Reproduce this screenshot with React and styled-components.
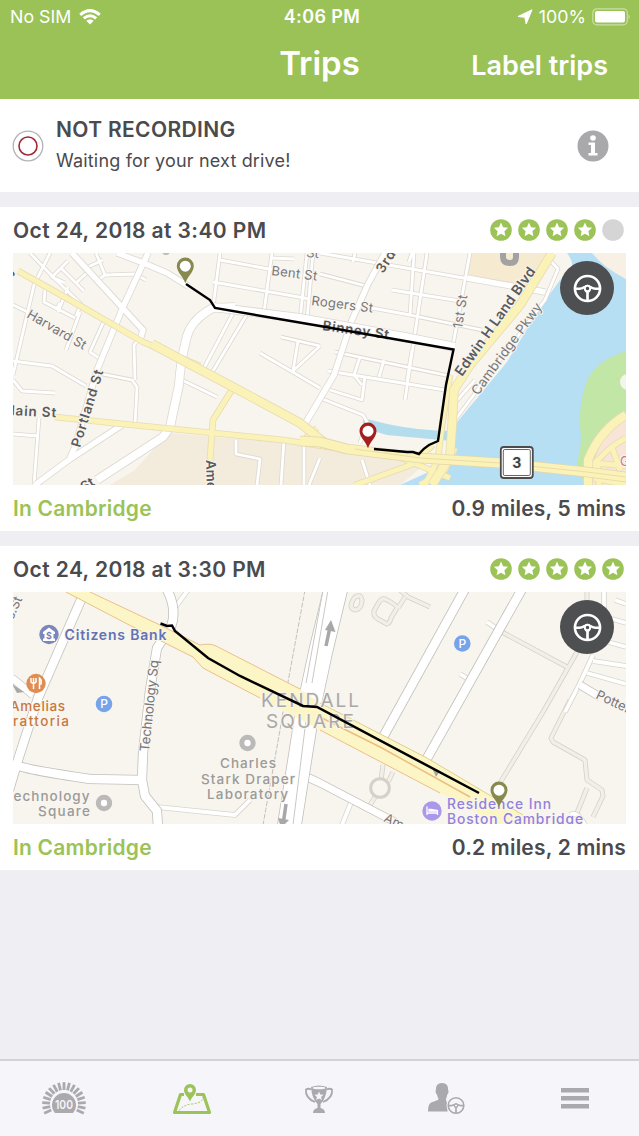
import React from "react";
import styled, { createGlobalStyle } from "styled-components";

const GlobalStyle = createGlobalStyle`
  * {
    box-sizing: border-box;
  }

  body {
    margin: 0;
    background: #efeef2;
    font-family: "Inter", "Liberation Sans", sans-serif;
  }

  svg {
    display: block;
  }
`;

const Screen = styled.div`
  display: flex;
  flex-direction: column;
  height: 1136px;
  width: 639px;
  overflow: hidden;
  background: #efeef2;
  color: #4b4a4d;
`;

const Header = styled.header`
  height: 99px;
  flex: none;
  background: #9ac256;
  color: #fff;
`;

const StatusBar = styled.div`
  display: grid;
  grid-template-columns: 1fr auto 1fr;
  align-items: center;
  height: 33px;
  padding: 0 9px 0 10px;
  font-size: 17.8px;
`;

const StatusGroup = styled.div`
  display: flex;
  align-items: center;
  justify-content: ${(props) => (props.$end ? "flex-end" : "flex-start")};
  gap: ${(props) => (props.$end ? 6 : 8)}px;
`;

const Clock = styled.span`
  padding-left: 4px;
  font-weight: 600;
  font-size: 18px;
  letter-spacing: 0.4px;
`;

const NavBar = styled.div`
  display: grid;
  grid-template-columns: 1fr auto 1fr;
  align-items: center;
  height: 60px;
  padding: 0 31px;
`;

const Title = styled.h1`
  grid-column: 2;
  margin: 0;
  font-size: 33px;
  line-height: 60px;
  font-weight: 600;
  letter-spacing: 0;
`;

const NavAction = styled.a`
  justify-self: end;
  padding-top: 4px;
  font-size: 27px;
  font-weight: 600;
  letter-spacing: 0;
`;

const RecordingPanel = styled.section`
  display: flex;
  align-items: center;
  flex: none;
  height: 93px;
  padding: 0 30px 0 12px;
  background: #fff;
`;

const RecordingText = styled.div`
  flex: 1;
  margin-left: 12px;
`;

const RecordingTitle = styled.div`
  font-size: 21px;
  line-height: 30px;
  font-weight: 600;
  letter-spacing: 0.35px;
`;

const RecordingHint = styled.div`
  font-size: 18px;
  line-height: 31px;
  letter-spacing: 0.17px;
`;

const Card = styled.article`
  flex: none;
  height: 324px;
  margin-top: 15px;
  padding: 0 13px;
  background: #fff;
`;

const CardRow = styled.div`
  display: flex;
  align-items: center;
  justify-content: space-between;
  height: 46px;
  font-size: 21px;
  font-weight: 600;
`;

const TripDate = styled.span`
  letter-spacing: 0.41px;
`;

const Place = styled.span`
  color: #9bc357;
  letter-spacing: 0.22px;
`;

const Distance = styled.span`
  letter-spacing: 0.2px;
`;

const Stars = styled.div`
  display: flex;
  gap: 6px;
  margin-right: 2px;
`;

const MapFrame = styled.div`
  position: relative;
  height: 232px;
  overflow: hidden;

  text {
    font-family: "Inter", sans-serif;
    paint-order: stroke;
    stroke: #f8f5ef;
    stroke-width: 2px;
    stroke-linejoin: round;
  }
`;

const WheelBadge = styled.div`
  position: absolute;
  top: 8px;
  right: 12px;
  display: grid;
  place-items: center;
  width: 54px;
  height: 54px;
  border-radius: 50%;
  background: #4e4f51;
  color: #fff;
`;

const TabBar = styled.nav`
  display: grid;
  grid-template-columns: repeat(5, 1fr);
  align-items: start;
  justify-items: center;
  flex: none;
  height: 77px;
  margin-top: auto;
  padding-top: 21px;
  background: #f6f5f9;
  border-top: 2px solid #d3d2d6;
`;

const Tab = styled.div`
  padding-top: ${(props) => props.$top}px;
  color: ${(props) => (props.$active ? "#9bc357" : "#aaa9ad")};
`;

const starPath =
  "M11 3.6l2.1 4.6 5 .6-3.7 3.4 1 5L11 14.7l-4.4 2.5 1-5-3.7-3.4 5-.6z";

const Star = ({ filled }) => (
  <svg width="22" height="22" viewBox="0 0 22 22">
    <circle cx="11" cy="11" r="10.8" fill={filled ? "#9bc357" : "#d5d5d5"} />
    {filled && <path d={starPath} fill="#fff" />}
  </svg>
);

const Wheel = ({ size, ...rest }) => (
  <svg width={size} height={size} viewBox="0 0 30 30" fill="none" stroke="currentColor" {...rest}>
    <circle cx="15" cy="15" r="13" strokeWidth="2.7" />
    <path d="M2 15.2H7Q10 15 12 13.500M28 15.200H23Q20 15 18 13.500" strokeWidth="2.700" />
    <path d="M11.500 13.500Q15 10.500 18.500 13.500" strokeWidth="1.500" />
    <path d="M15 18V28" strokeWidth="2.800" />
    <path d="M12 15.500L14 19M18 15.500L16 19" strokeWidth="1.500" />
    <circle cx="15" cy="15" r="2.800" strokeWidth="2" />
  </svg>
);

const Pin = ({ x, y, color }) => (
  <g transform={`translate(${x} ${y})`}>
    <path
      d="M0 0C-1.500-6.500-8.500-11-8.500-17.500A8.500 8.500 0 0 1 8.500-17.500C8.500-11 1.500-6.500 0 0z"
      fill={color}
    />
    <circle cy="-17.300" r="5.500" fill="#fff" />
  </g>
);

// Each road is stroked twice: once for its outline, once for its surface.
const Roads = ({ paths, width, fill = "#fff", edge = "#ddd9d1" }) => (
  <g fill="none" strokeLinejoin="round">
    {paths.map((d) => (
      <path key={`e${d}`} d={d} stroke={edge} strokeWidth={width + 1.6} />
    ))}
    {paths.map((d) => (
      <path key={d} d={d} stroke={fill} strokeWidth={width} />
    ))}
  </g>
);

const Label = ({ x, y, rotate = 0, size = 13.5, width, color = "#77767a", weight = 400, children }) => (
  <text
    transform={`translate(${x} ${y}) rotate(${rotate})`}
    fontSize={size}
    fontWeight={weight}
    fill={color}
    textLength={width}
  >
    {children}
  </text>
);

const Parking = ({ x, y }) => (
  <g>
    <circle cx={x} cy={y} r="8.300" fill="#76a3ea" />
    <text x={x} y={y + 4.2} textAnchor="middle" fontSize="12" fontWeight="500" fill="#fff" style={{ stroke: "none" }}>
      P
    </text>
  </g>
);

const Landmark = ({ x, y }) => (
  <circle cx={x} cy={y} r="5.700" fill="#fff" stroke="#bcbab8" strokeWidth="5" />
);

const RiverMap = () => (
  <svg width="613" height="232" viewBox="13 253 613 232">
    <rect x="13" y="253" width="613" height="232" fill="#f8f4ee" />
    <path d="M168 433L320 446 430 460 400 485H110L135 470z" fill="#f3ebdc" />
    <path d="M470 253H552L528 286 466 279z" fill="#f6ebd0" />
    <path d="M567 253H594Q608 268 626 279V485H400L422 475 449 462 453 427 507 362 540 308 560 280Q580 270 567 253z" fill="#b7dff4" />
    <path d="M592 253H626V279Q604 268 592 253z" fill="#f8f0e4" />
    <path d="M626 351Q600 359 588 378 579 400 580 425Q583 445 577 462L584 485H626z" fill="#c1e6a6" />
    <circle cx="628" cy="382" r="8" fill="#f4f5ea" />
    <path d="M626 417Q598 436 592 470L584 485H626z" fill="#f9e4d8" />
    <path d="M363 418L387 424Q420 431 452 431V441L387 435 363 428z" fill="#b3dcec" />

    <Roads
      width={2.8}
      paths={[
        "M30 253L53 277 81 304 76 316",
        "M13 305L38 317M13 361Q35 364 52 366L86 386",
        "M50 253L34 285 13 375",
        "M61 268L84 291M68 261L52 277 65 283M96 253L105 275 95 282M105 275L135 274 146 280",
        "M88 267L103 260M76 283L90 270M58 312L68 287",
        "M45 290L44 302 75 318M56 310L60 303M80 312L66 350M103 323L90 352 102 360",
        "M102 374L132 380 137 387 135 425M135 380L134 345 142 336",
        "M13 380L22 391 55 393M13 434L38 436M39 418L34 485",
        "M220 253L213 308M220 260L274 270M213 282L310 299M272 253L264 312",
        "M313 253L307 320M272 258L294 259M307 253L300 320",
        "M355 253L353 262M414 253L410 315M412 253L409 262",
        "M320 253L475 280M320 274L370 287M427 253L405 400",
        "M392 290L460 301M372 308L410 315 482 330M470 253L453 345",
        "M233 313L204 368M247 314L213 371M281 337L320 346M298 341L293 371M260 353L320 388M293 371L320 346",
        "M335 352L450 376M360 357L354 375 362 385M384 360L379 377M412 350L407 381M328 371L445 390M320 398L363 415 367 422 360 443",
        "M365 376L362 400 330 390",
        "M182 380L217 397M236 440V454L260 459 257 485M284 440L281 485M304 443V485M320 458L309 485",
        "M550 260L558 269 545 300 455 420 453 405M453 405L475 380",
        "M362 460L370 485",
      ]}
    />
    <Roads
      width={5.5}
      paths={[
        "M117 253L146 264 167 273 188 286",
        "M148 253L123 307 97 370 75 447 70 458",
        "M72 253L143 330 140 340",
        "M122 425L70 459 35 485",
        "M385 253L368 284 352 320 334 375 305 424",
        "M467 278L545 292",
      ]}
    />
    <Roads
      width={8}
      paths={["M235 307L213 308Q190 320 186 340 180 365 179 385L170 427 163 437 97 480", "M213 307L300 318 405 337 455 347"]}
    />
    <Roads
      width={5}
      fill="#fbf2b8"
      edge="#e6dcb4"
      paths={[
        "M233 388L213 420 212 432 210 460",
        "M18 271L70 300 143 342 200 366",
        "M55 417L133 425 283 440 350 450",
        "M305 439L317 428",
        "M355 485L405 467 433 456M433 445Q412 464 399 457L450 478",
        "M450 375L442 425 438 459 425 485",
        "M455 448L445 470 420 485",
        "M626 438Q604 450 594 466L588 485M599 485L597 458M584 462L626 466M612 447L620 470M594 478L626 485",
      ]}
    />
    <Roads
      width={8}
      fill="#fbf2b8"
      edge="#e6dcb4"
      paths={[
        "M152 344L182 360 233 387 300 423 325 443",
        "M552 253L520 305 470 365 454 390 452 427 450 457 432 485",
        "M626 415Q600 430 588 460V485",
      ]}
    />
    <Roads
      width={9}
      fill="#fbf2b8"
      edge="#e3d7aa"
      paths={["M300 441L320 442 347 449 420 458 500 463 587 472 626 477"]}
    />
    <path d="M355 449L420 458 500 463 587 472 626 477" stroke="#e9dcaa" fill="none" />

    <path d="M503 253V257Q503 263 510 263 516 263 516 257V253" fill="none" stroke="#a3a2a2" strokeWidth="6" />
    <circle cx="166" cy="251" r="4" fill="#bbb9bb" />
    <Label x={11} y={276} rotate={-68} weight={600} color="#555457">y</Label>
    <Label x={26} y={317} rotate={30} size={13} width={66}>Harvard St</Label>
    <Label x={271} y={275} rotate={7} size={13} width={46}>Bent St</Label>
    <Label x={311} y={305} rotate={7} size={13} width={62}>Rogers St</Label>
    <Label x={306} y={257} rotate={5} size={13}>St</Label>
    <Label x={383} y={274} rotate={-57} weight={600} color="#5b5a5d" width={24}>3rd</Label>
    <Label x={322} y={330} rotate={8} weight={600} color="#5b5a5d" width={67}>Binney St</Label>
    <Label x={462} y={329} rotate={-81} size={13} width={34}>1st St</Label>
    <Label x={462} y={377} rotate={-55} size={14} weight={600} color="#5b5a5d" width={129}>Edwin H Land Blvd</Label>
    <Label x={478} y={396} rotate={-54} size={13.3} width={110}>Cambridge Pkwy</Label>
    <Label x={11} y={415} rotate={3} weight={600} color="#5b5a5d" width={45}>lain St</Label>
    <Label x={80} y={448} rotate={-73} weight={600} color="#5b5a5d" width={80}>Portland St</Label>
    <Label x={84} y={492} rotate={-32} weight={600} color="#5b5a5d">St</Label>
    <Label x={206} y={460} rotate={88} weight={600} color="#5b5a5d">Ames</Label>
    <Label x={620} y={466} size={13} color="#dc7477">G</Label>

    <path
      d="M186 284L210 300 215 308 320 326 453.500 349.500 446 385 441 420 438 441 429 445Q424 448 419 454L413 452H407L374 449"
      fill="none"
      stroke="#000"
      strokeWidth="2.400"
    />
    <Pin x={185.3} y={283.5} color="#87894f" />
    <Pin x={368} y={448.5} color="#a31f1e" />
    <rect x="500.800" y="447" width="32" height="31" rx="3" fill="#fff" stroke="#4c4c4c" strokeWidth="1.800" />
    <rect x="503.300" y="449.500" width="27" height="26" rx="1.500" fill="none" stroke="#666" />
    <text x="516.800" y="468" textAnchor="middle" fontSize="14" fontWeight="700" fill="#3f3f3f">3</text>
  </svg>
);

const KendallMap = () => (
  <svg width="613" height="232" viewBox="13 592 613 232">
    <rect x="13" y="592" width="613" height="232" fill="#f8f5ef" />
    <Roads
      width={3.4}
      fill="#f2efe6"
      edge="#d4d1c9"
      paths={[
        "M502 632L567 667M400 590L408 597 430 607M405 597L398 608",
        "M587 590V600L577 652 543 712 500 783",
        "M570 700L551 738 553 742 585 760 587 780 602 790 603 796 593 817M587 788L577 813",
        "M383 765L381 780M393 772L388 782M375 797L370 805",
        "M379 602L374 611Q373 616 378 619L387 624Q390 623 391 618L397 608Q397 605 385 599 382 598 379 602",
        "M353 600Q348 609 356 610 362 608 362 600 361 595 358 596 355 596 353 600",
      ]}
    />
    <Roads
      width={3.8}
      edge="#d8d5cd"
      paths={[
        "M157 807L235 815 250 800",
        "M188 590L174 609",
        "M593 655L580 683 565 712M593 661L626 666M587 673L626 684M615 600L626 604M612 619L626 623M608 642L626 647",
        "M487 622L497 629M460 674L468 679M604 590V620",
        "M352 800L342 825",
        "M570 815Q577 810 585 825",
      ]}
    />
    <Roads width={7} edge="#c9c7c2" paths={["M580 685L600 697", "M305 776L320 783 395 822", "M12 678L33 695"]} />
    <Roads
      width={8.5}
      edge="#c2c0bc"
      paths={[
        "M84 593L38 698 17 763 9 790",
        "M17 765Q22 769 90 779L143 780",
        "M165 586Q178 608 171 627L157 648 150 690 143 753 142 780 145 796 157 811 158 828",
        "M465 589L382 739",
        "M522 589L425 762",
      ]}
    />
    <Roads width={23} edge="#c2c0bc" paths={["M336 588L321 650 306 720 289 828"]} />
    <path d="M323 590L306 683M328 590L312 683M306 720L293 825" fill="none" stroke="#cac8c4" />
    <path d="M305 590L288 682 280 730 263 825" fill="none" stroke="#c3c1bd" strokeDasharray="5 1.500" />
    <path
      d="M66 592L135 628 165 643 193 657 203 668 260 698 320 730 440 793 500 825H543L523 815 427 758 320 703 300 689 213 645 200 645 160 625 90 592z"
      fill="#fcf6c7"
    />
    <g fill="none" stroke="#ebbf87" strokeWidth="1">
      <path d="M66 592L135 628 165 643 193 657 203 668 260 698M320 730L440 793" />
      <path d="M90 592L160 625 200 645Q210 643 216 646L300 689" />
      <path d="M320 717L382 748 470 797" stroke="#edbd80" strokeWidth="1.500" />
      <path d="M320 703L427 758 523 815" stroke="#ddd08c" />
    </g>
    <circle cx="380" cy="788" r="9.300" fill="#f8f5ef" stroke="#d4d1c9" strokeWidth="3" />
    <path d="M432 768L440 771 436 777z" fill="#aaa69d" />
    <g fill="none" stroke="#a9a8a8" strokeWidth="3.500">
      <path d="M326 646L330 627M283 825L286 804" />
    </g>
    <path d="M331 620L335.500 632 325 630z" fill="#a9a8a8" />
    <path d="M278 818L289 820 281 828z" fill="#a9a8a8" />
    <path d="M12 684L24 692 17 693z" fill="#a9a8a8" />

    <Label x={13} y={620} rotate={-66} size={13}>s.St</Label>
    <circle cx="49" cy="634.500" r="9.700" fill="#7b86bd" />
    <path d="M43 632L49 627.500 55 632V634H53.500V638.500H55V641H43V638.500H44.500V634H43z" fill="#fff" />
    <text x="49" y="638.500" textAnchor="middle" fontSize="9" fontWeight="600" fill="#6e79b5" style={{ stroke: "none" }}>$</text>
    <Label x={64.5} y={639.5} size={14} weight={600} color="#6272b2" width={102}>Citizens Bank</Label>
    <circle cx="36" cy="683.500" r="9.700" fill="#df8d52" />
    <g fill="none" stroke="#fff" strokeWidth="1.500">
      <path d="M33.500 678V689M31 678V682Q33.500 685 36 682V678M39.500 689V678Q42 680 41 684H39.500" />
    </g>
    <Label x={10} y={711} size={13.5} weight={500} color="#c9773f" width={55}>Amelias</Label>
    <Label x={13} y={726} size={13.5} weight={500} color="#c9773f" width={56}>rattoria</Label>
    <Parking x={104} y={704} />
    <Parking x={462.3} y={643.5} />
    <Label x={149} y={752} rotate={-84} size={13.300} width={92}>Technology Sq</Label>
    <Label x={261} y={707} size={19} color="#aaa8a6" width={98}>KENDALL</Label>
    <Label x={266} y={727.5} size={19} color="#aaa8a6" width={88}>SQUARE</Label>
    <Landmark x={247.500} y={743} />
    <Label x={220} y={768} size={13.5} weight={500} color="#9b9a98" width={56}>Charles</Label>
    <Label x={201} y={783.5} size={13.500} weight={500} color="#9b9a98" width={94}>Stark Draper</Label>
    <Label x={207} y={799} size={13.5} weight={500} color="#9b9a98" width={81}>Laboratory</Label>
    <Label x={13.500} y={800.500} size={13.500} weight={500} color="#9b9a98" width={76}>echnology</Label>
    <Label x={38} y={816} size={13.5} weight={500} color="#9b9a98" width={52}>Square</Label>
    <Landmark x={104} y={803} />
    <Label x={383} y={821} rotate={26} size={13}>Ames</Label>
    <Label x={595} y={698} rotate={25} size={13}>Potter</Label>

    <path
      d="M160.500 623.500L167 626 172 625.500 175 631 208 658 240 676 303 706 317 707 479 793"
      fill="none"
      stroke="#000"
      strokeWidth="2.500"
    />
    <circle cx="432" cy="811" r="9.700" fill="#aa98ea" />
    <path d="M427 806.500V815M427 813H437.500V815M437.500 813V810.500L431 809.500H429V811H437" fill="none" stroke="#fff" strokeWidth="1.300" />
    <Label x={447} y={808.5} size={13.8} weight={500} color="#9280dd" width={104}>Residence Inn</Label>
    <Label x={447} y={824} size={13.8} weight={500} color="#9280dd" width={136}>Boston Cambridge</Label>
    <Pin x={499} y={807.5} color="#87894f" />
  </svg>
);

const trips = [
  { date: "Oct 24, 2018 at 3:40 PM", stars: 4, summary: "0.9 miles, 5 mins", Map: RiverMap },
  { date: "Oct 24, 2018 at 3:30 PM", stars: 5, summary: "0.2 miles, 2 mins", Map: KendallMap },
];

const TripCard = ({ date, stars, summary, Map }) => (
  <Card>
    <CardRow>
      <TripDate>{date}</TripDate>
      <Stars>
        {[1, 2, 3, 4, 5].map((n) => (
          <Star key={n} filled={n <= stars} />
        ))}
      </Stars>
    </CardRow>
    <MapFrame>
      <Map />
      <WheelBadge>
        <Wheel size={29} />
      </WheelBadge>
    </MapFrame>
    <CardRow>
      <Place>In Cambridge</Place>
      <Distance>{summary}</Distance>
    </CardRow>
  </Card>
);

const WifiIcon = () => (
  <svg width="22" height="16" viewBox="0 0 22 16" fill="none" stroke="#fff" strokeWidth="3">
    <path d="M1.200 5.800Q11-2.600 20.800 5.800M4.800 9.400Q11 4 17.200 9.400" />
    <path d="M11 15.500L7.300 11.800Q11 8.800 14.700 11.800z" fill="#fff" stroke="none" />
  </svg>
);

const LocationIcon = () => (
  <svg width="16" height="16" viewBox="0 0 16 16">
    <path d="M15 .8L9.200 15 7.800 8.300 1 7.500z" fill="#fff" stroke="#fff" strokeLinejoin="round" />
  </svg>
);

const BatteryIcon = () => (
  <svg width="38" height="18" viewBox="0 0 38 18">
    <rect x="0.800" y="0.800" width="34.500" height="16" rx="4" fill="none" stroke="#c9dfa6" strokeWidth="1.200" />
    <rect x="3" y="3" width="30" height="11.600" rx="2" fill="#fff" />
    <path d="M36.500 6Q39 8.800 36.500 11.600z" fill="#c9dfa6" />
  </svg>
);

const GaugeIcon = () => (
  <svg width="44" height="36" viewBox="0 0 44 36">
    <g stroke="currentColor" strokeWidth="2.800">
      {Array.from({ length: 17 }, (_, i) => (
        <path key={i} d="M14 0H21.800" transform={`translate(22 22) rotate(${-205 + i * 14.375})`} />
      ))}
    </g>
    <path d="M13 31A12 12 0 1 1 31 31z" fill="currentColor" />
    <text x="13" y="26.500" fontSize="12" fontWeight="600" fill="#f6f5f9" textLength="18" lengthAdjust="spacingAndGlyphs">
      100
    </text>
  </svg>
);

const MapIcon = () => (
  <svg width="40" height="34" viewBox="0 0 40 34">
    <path d="M12 11.500H8.500L2.500 29.500H37.500L31.500 11.500H24" fill="none" stroke="currentColor" strokeWidth="3.200" strokeLinejoin="round" />
    <path d="M7 27.500Q12 21.500 20 21 31 20 31 14" fill="none" stroke="currentColor" strokeDasharray="2 1.500" />
    <path d="M18 18.500C16.500 14 12 11.500 12 7A6 6 0 0 1 24 7C24 11.500 19.500 14 18 18.500z" fill="currentColor" />
    <circle cx="18" cy="7" r="2.500" fill="#f6f5f9" />
  </svg>
);

const TrophyIcon = () => (
  <svg width="30" height="30" viewBox="0 0 30 30">
    <path d="M7 2Q15-1 23 2 22 14 16.500 19V23Q21 24 21 28H9Q9 24 13.500 23V19Q8 14 7 2z" fill="currentColor" />
    <ellipse cx="15" cy="3" rx="6.500" ry="1.300" fill="#f6f5f9" />
    <path d="M7.500 4.500Q4 3 2 4.500Q1 13 11 17M22.500 4.500Q26 3 28 4.500Q29 13 19 17" fill="none" stroke="currentColor" strokeWidth="1.800" />
    <path d="M15 6.500l1.300 3 3.200.300-2.400 2.100.700 3.100L15 13.400 12.200 15l.7-3.100-2.400-2.100 3.200-.3z" fill="#f6f5f9" />
  </svg>
);

const DriverIcon = () => (
  <svg width="38" height="32" viewBox="0 0 38 32">
    <path
      d="M14 0C9.500 0 7.700 3 8 7 7 7.500 8 11 9 11.500 9.500 14 10 14.500 10.500 16 10.500 18 2 18.500 1 22 .3 24 0 26 0 28.500H19.500V21L18 17V16C18.500 14.500 19 13.500 19.200 11.500 20.500 11 21 7.500 20 7 20.500 3 18.500 0 14 0z"
      fill="currentColor"
    />
    <circle cx="28" cy="22.500" r="9.500" fill="#f6f5f9" />
    <Wheel size={18} x="19" y="13.500" />
  </svg>
);

const MenuIcon = () => (
  <svg width="28" height="22" viewBox="0 0 28 22" fill="currentColor">
    <path d="M0 0H28V4.500H0zM0 8H28V12.500H0zM0 16H28V20.500H0z" />
  </svg>
);

const tabs = [
  { name: "score", Icon: GaugeIcon, top: 0 },
  { name: "trips", Icon: MapIcon, top: 1, active: true },
  { name: "rewards", Icon: TrophyIcon, top: 3 },
  { name: "driver", Icon: DriverIcon, top: 1 },
  { name: "menu", Icon: MenuIcon, top: 6 },
];

function App() {
  return (
    <>
      <GlobalStyle />
      <Screen>
        <Header>
          <StatusBar>
            <StatusGroup>
              <span>No SIM</span>
              <WifiIcon />
            </StatusGroup>
            <Clock>4:06 PM</Clock>
            <StatusGroup $end>
              <LocationIcon />
              <span>100%</span>
              <BatteryIcon />
            </StatusGroup>
          </StatusBar>
          <NavBar>
            <Title>Trips</Title>
            <NavAction>Label trips</NavAction>
          </NavBar>
        </Header>

        <RecordingPanel>
          <svg width="32" height="32" viewBox="0 0 32 32" fill="none">
            <circle cx="16" cy="16" r="14.800" stroke="#b3b3b6" strokeWidth="1.300" />
            <circle cx="16" cy="16" r="9" stroke="#a02a35" strokeWidth="1.600" />
          </svg>
          <RecordingText>
            <RecordingTitle>NOT RECORDING</RecordingTitle>
            <RecordingHint>Waiting for your next drive!</RecordingHint>
          </RecordingText>
          <svg width="32" height="32" viewBox="0 0 32 32">
            <circle cx="16" cy="16" r="15.500" fill="#a9a9ab" />
            <circle cx="16" cy="8" r="2.800" fill="#fff" />
            <path d="M11.500 12.500H18V23H20.500V25.500H11.500V23H14V15H11.500z" fill="#fff" />
          </svg>
        </RecordingPanel>

        {trips.map((trip) => (
          <TripCard key={trip.date} {...trip} />
        ))}

        <TabBar>
          {tabs.map(({ name, Icon, top, active }) => (
            <Tab key={name} $top={top} $active={active}>
              <Icon />
            </Tab>
          ))}
        </TabBar>
      </Screen>
    </>
  );
}

export default App;
